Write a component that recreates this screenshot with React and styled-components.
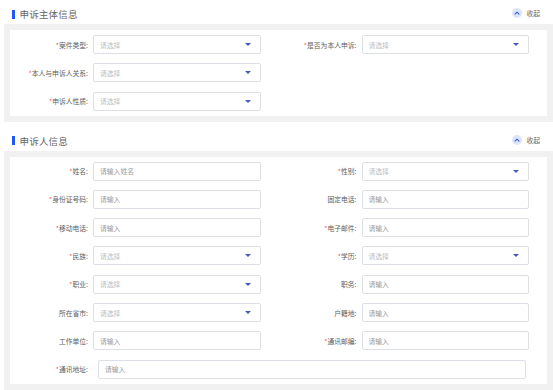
import React from 'react';
import styled, { createGlobalStyle } from 'styled-components';

const GlobalStyle = createGlobalStyle`
  body {
    margin: 0;
    background: #fff;
    font-family: "Noto Sans CJK SC", "Noto Sans", sans-serif;
  }
`;

const sections = [
  {
    title: '申诉主体信息',
    fields: [
      { label: '案件类型', required: true, select: true },
      { label: '是否为本人申诉', required: true, select: true },
      { label: '本人与申诉人关系', required: true, select: true },
      null,
      { label: '申诉人性质', required: true, select: true },
    ],
  },
  {
    title: '申诉人信息',
    fields: [
      { label: '姓名', required: true, placeholder: '请输入姓名' },
      { label: '性别', required: true, select: true },
      { label: '身份证号码', required: true },
      { label: '固定电话' },
      { label: '移动电话', required: true },
      { label: '电子邮件', required: true },
      { label: '民族', required: true, select: true },
      { label: '学历', required: true, select: true },
      { label: '职业', required: true, select: true },
      { label: '职务' },
      { label: '所在省市', select: true },
      { label: '户籍地' },
      { label: '工作单位' },
      { label: '通讯邮编', required: true },
      { label: '通讯地址', required: true, wide: true },
    ],
  },
];

const ChevronUp = () => (
  <svg width="6" height="4" viewBox="0 0 10 7">
    <path d="M1.5 5.5 L5 2 L8.5 5.5" fill="none" stroke="#3558d8" strokeWidth="1.8" strokeLinecap="round" strokeLinejoin="round" />
  </svg>
);

const Field = ({ label, required, select, placeholder, wide }) => (
  <FieldRow wide={wide}>
    <Label>
      {required && <Star>*</Star>}
      {label}:
    </Label>
    {select ? (
      <Select>
        <span>请选择</span>
        <Caret />
      </Select>
    ) : (
      <Input placeholder={placeholder || '请输入'} />
    )}
  </FieldRow>
);

const App = () => {
  return (
    <Page>
      <GlobalStyle />
      {sections.map((section) => (
        <Section key={section.title}>
          <Header>
            <Title>{section.title}</Title>
            <Collapse>
              <CollapseIcon><ChevronUp /></CollapseIcon>
              收起
            </Collapse>
          </Header>
          <Panel>
            <Card>
              {section.fields.map((field, i) =>
                field ? <Field key={field.label} {...field} /> : <div key={i} />
              )}
            </Card>
          </Panel>
        </Section>
      ))}
    </Page>
  );
};

const Page = styled.div`
  width: 553px;
  padding-top: 4px;
`;

const Section = styled.section`
  & + & {
    margin-top: 9px;
  }
`;

const Header = styled.div`
  height: 20px;
  display: flex;
  align-items: center;
  justify-content: space-between;
  padding: 0 13px 0 12px;
`;

const Title = styled.h2`
  margin: 0;
  display: flex;
  align-items: center;
  font-size: 9.5px;
  font-weight: 400;
  color: #666;
  letter-spacing: 0.2px;

  &::before {
    content: '';
    width: 2.5px;
    height: 9px;
    margin-right: 5px;
    background: #1f57f5;
  }
`;

const Collapse = styled.div`
  display: flex;
  align-items: center;
  gap: 4px;
  font-size: 6.8px;
  color: #666;
  margin-top: -2px;
`;

const CollapseIcon = styled.span`
  width: 10px;
  height: 10px;
  border-radius: 50%;
  background: #dde5fb;
  display: flex;
  align-items: center;
  justify-content: center;
`;

const Panel = styled.div`
  margin-left: 4px;
  padding: 6px;
  background: #f1f1f1;
`;

const Card = styled.div`
  background: #fff;
  padding: 5px 0;
  display: grid;
  grid-template-columns: 1fr 1fr;
  row-gap: 9.3px;
`;

const FieldRow = styled.div`
  display: flex;
  align-items: center;
  grid-column: ${(p) => (p.wide ? '1 / -1' : 'auto')};
  gap: ${(p) => (p.wide ? '10px' : '5px')};
  padding-right: ${(p) => (p.wide ? '21px' : '18px')};
`;

const Label = styled.label`
  width: 78px;
  flex-shrink: 0;
  text-align: right;
  font-size: 6.8px;
  color: #606060;
  white-space: nowrap;
`;

const Star = styled.span`
  color: #f0504f;
`;

const boxStyle = `
  flex: 1;
  min-width: 0;
  height: 19px;
  box-sizing: border-box;
  border: 1px solid #dcdfe8;
  border-radius: 2px;
  padding: 0 9px 0 6px;
  font-family: "Noto Sans CJK SC", sans-serif;
  font-size: 6.8px;
  background: #fff;
`;

const Input = styled.input`
  ${boxStyle}
  outline: none;
  color: #555;

  &::placeholder {
    color: #9a9a9a;
  }
`;

const Select = styled.div`
  ${boxStyle}
  display: flex;
  align-items: center;
  justify-content: space-between;
  color: #bdbdbd;
`;

const Caret = styled.span`
  width: 0;
  height: 0;
  border-left: 3px solid transparent;
  border-right: 3px solid transparent;
  border-top: 3.5px solid #4459b8;
`;

export default App;
